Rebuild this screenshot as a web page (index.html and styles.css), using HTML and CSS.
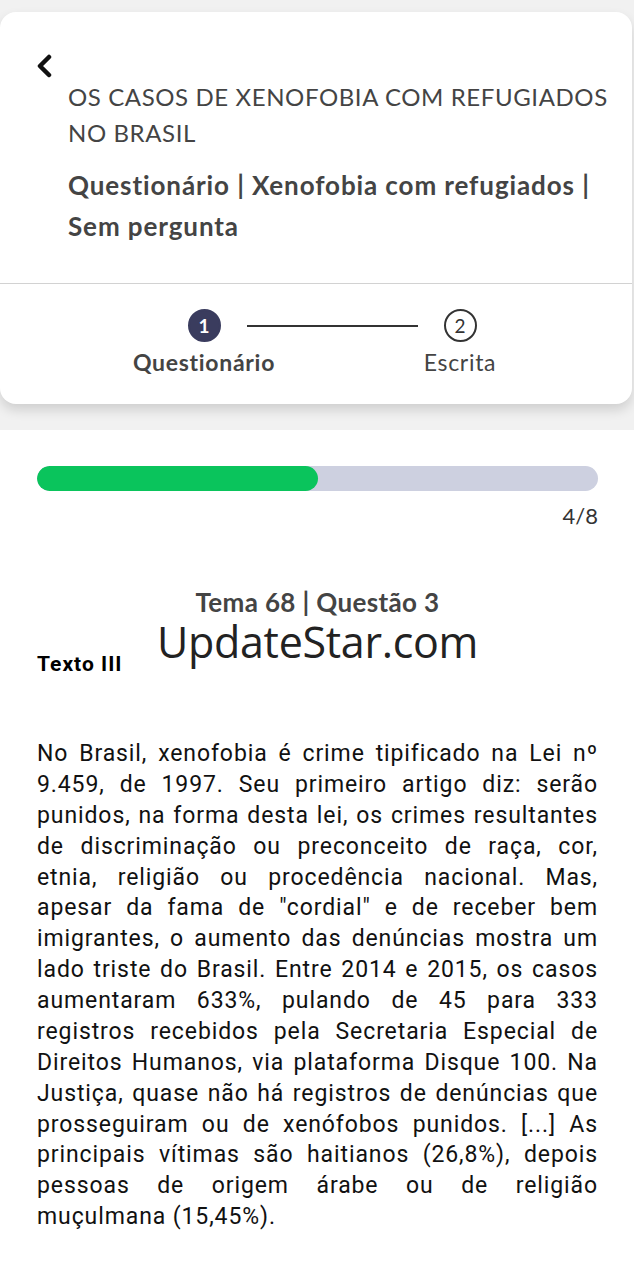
FILE: index.html
```html
<!DOCTYPE html>
<html lang="pt">
<head>
<meta charset="utf-8">
<link rel="stylesheet" href="styles.css">
</head>
<body>
<div class="page">
  <header class="card">
    <div class="head">
      <svg class="back" width="18" height="24" viewBox="0 0 18 24"><path d="M14 3 L5 12 L14 21" fill="none" stroke="#111" stroke-width="4.5" stroke-linecap="round" stroke-linejoin="round"/></svg>
      <h1 class="title">OS CASOS DE XENOFOBIA COM REFUGIADOS NO BRASIL</h1>
      <h2 class="subtitle">Questionário | Xenofobia com refugiados | Sem pergunta</h2>
    </div>
    <div class="stepper">
      <div class="step active">
        <span class="dot">1</span>
        <span class="label">Questionário</span>
      </div>
      <div class="connector"></div>
      <div class="step">
        <span class="dot">2</span>
        <span class="label">Escrita</span>
      </div>
    </div>
  </header>
  <main class="content">
    <div class="progress"><div class="fill" style="width:50%"></div></div>
    <div class="count">4/8</div>
    <div class="qtitle">Tema 68 | Questão 3</div>
    <div class="textrow">
      <span class="texto">Texto III</span>
      <span class="watermark">UpdateStar.com</span>
    </div>
    <p class="para">No Brasil, xenofobia é crime tipificado na Lei nº 9.459, de 1997. Seu primeiro artigo diz: serão punidos, na forma desta lei, os crimes resultantes de discriminação ou preconceito de raça, cor, etnia, religião ou procedência nacional. Mas, apesar da fama de "cordial" e de receber bem imigrantes, o aumento das denúncias mostra um lado triste do Brasil. Entre 2014 e 2015, os casos aumentaram 633%, pulando de 45 para 333 registros recebidos pela Secretaria Especial de Direitos Humanos, via plataforma Disque 100. Na Justiça, quase não há registros de denúncias que prosseguiram ou de xenófobos punidos. [...] As principais vítimas são haitianos (26,8%), depois pessoas de origem árabe ou de religião muçulmana (15,45%).</p>
  </main>
</div>
</body>
</html>
```

FILE: styles.css
```css
* { box-sizing: border-box; }
html, body { margin: 0; padding: 0; }
body {
  background: #ffffff;
  width: 634px;
  min-height: 1280px;
  font-family: "Lato", "Noto Sans", sans-serif;
}
.page {
  background: linear-gradient(#f1f1f1 0, #f1f1f1 430px, #ffffff 430px);
  min-height: 1280px;
  padding-top: 12px;
}
.card {
  background: #ffffff;
  border-radius: 16px;
  margin-right: 2px;
  box-shadow: 0 6px 12px rgba(0,0,0,0.14);
}
.head {
  padding: 67px 20px 36px 68px;
  position: relative;
  border-bottom: 1px solid #d2d2d2;
}
.back {
  position: absolute;
  left: 35px;
  top: 42px;
}
.title {
  margin: 0;
  font-weight: 400;
  font-size: 24px;
  line-height: 36px;
  color: #444444;
  letter-spacing: 0.6px;
}
.subtitle {
  margin: 14px 0 0 0;
  font-weight: 700;
  font-size: 26px;
  line-height: 41px;
  color: #444444;
  letter-spacing: 0.9px;
}
.stepper {
  display: flex;
  justify-content: flex-start;
  align-items: flex-start;
  padding: 25px 0 28px 124px;
}
.step {
  display: flex;
  flex-direction: column;
  align-items: center;
  width: 160px;
}
.dot {
  width: 33px;
  height: 33px;
  border-radius: 50%;
  border: 2px solid #333333;
  display: flex;
  align-items: center;
  justify-content: center;
  font-size: 19px;
  color: #333;
  line-height: 1;
}
.step.active .dot {
  background: #3a3c5e;
  border-color: #3a3c5e;
  color: #ffffff;
  font-weight: 700;
}
.label {
  margin-top: 6px;
  font-size: 23px;
  line-height: 28px;
  color: #444;
  letter-spacing: 0.7px;
}
.step.active .label { font-weight: 700; }
.connector {
  width: 171px;
  height: 2px;
  background: #333;
  margin: 16px -38px 0 -37px;
}
.content {
  padding: 37px 36px 40px 37px;
  margin-top: 25px;
}
.progress {
  height: 25px;
  border-radius: 13px;
  background: #cdd0e0;
  overflow: hidden;
}
.fill {
  height: 100%;
  background: #0ac45c;
  border-radius: 13px;
}
.count {
  text-align: right;
  font-size: 22px;
  color: #333;
  margin-top: 12px;
  line-height: 26px;
}
.qtitle {
  text-align: center;
  font-weight: 700;
  font-size: 26px;
  color: #444;
  margin-top: 58px;
  line-height: 30px;
  letter-spacing: 0.35px;
}
.textrow {
  display: flex;
  align-items: flex-end;
  height: 59px;
  position: relative;
}
.texto {
  font-family: "Roboto", sans-serif;
  font-weight: 700;
  font-size: 21px;
  color: #000;
  line-height: 24px;
  letter-spacing: 1px;
}
.watermark {
  position: absolute;
  left: 0; right: 0; top: 3px;
  text-align: center;
  font-family: "Open Sans", "Noto Sans", sans-serif;
  font-size: 43px;
  color: #222;
  line-height: 44px;
  letter-spacing: -0.3px;
}
.para {
  margin: 63px 0 0 0;
  font-family: "Roboto", sans-serif;
  font-size: 23px;
  line-height: 30.87px;
  color: #111;
  text-align: justify;
  letter-spacing: 0.9px;
}
```
